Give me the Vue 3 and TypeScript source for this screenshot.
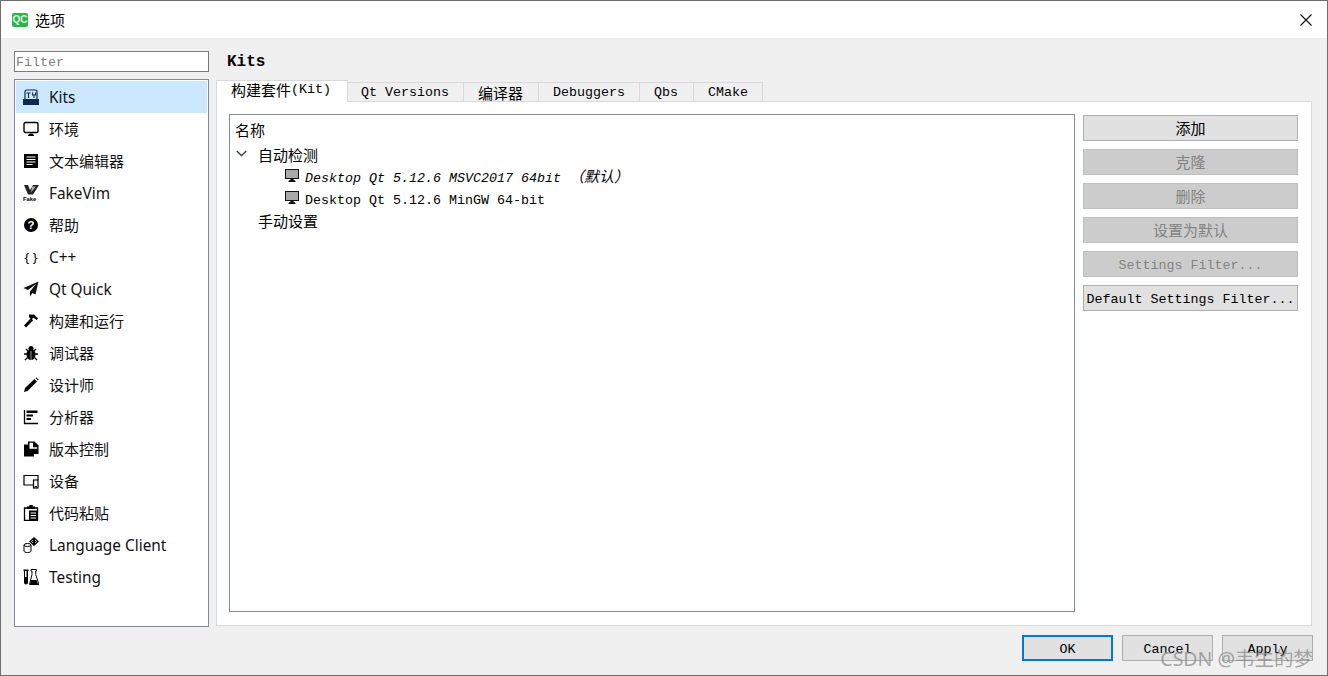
<script setup lang="ts">
const navItems: string[] = ['Kits','环境','文本编辑器','FakeVim','帮助','C++','Qt Quick','构建和运行','调试器','设计师','分析器','版本控制','设备','代码粘贴','Language Client','Testing']
const isLatin = (s: string): boolean => /^[A-Za-z]/.test(s)
const sideButtons = [
  { label: '添加', disabled: false, cjk: true },
  { label: '克隆', disabled: true, cjk: true },
  { label: '删除', disabled: true, cjk: true },
  { label: '设置为默认', disabled: true, cjk: true },
  { label: 'Settings Filter...', disabled: true, cjk: false },
  { label: 'Default Settings Filter...', disabled: false, cjk: false },
]
</script>

<template>
  <div class="window">
    <header class="titlebar">
      <span class="logo">QC</span>
      <span class="title">选项</span>
      <svg class="close" width="14" height="14" viewBox="0 0 14 14"><path d="M1.5 1.5l11 11M12.5 1.5l-11 11" stroke="#111" stroke-width="1.1" fill="none"/></svg>
    </header>
    <div class="body">
      <div class="columns">
        <aside class="sidebar">
          <input class="filter" placeholder="Filter" />
          <ul class="nav">
            <li v-for="(item, i) in navItems" :key="item" class="nav-item" :class="{ active: i === 0, latin: isLatin(item) }">
              <svg class="nav-icon" width="16" height="16" viewBox="0 0 16 16">
                <g v-if="i === 0">
                  <path d="M2 10V2.5A1.5 1.5 0 0 1 3.5 1h9A1.5 1.5 0 0 1 14 2.5V10" fill="none" stroke="#0f2a4a" stroke-width="1.2"/>
                  <path d="M3.5 4h4M5.5 4v5M9.5 3.5v2.5h3v-2.5M11 6v3" fill="none" stroke="#0f2a4a" stroke-width="1.1"/>
                  <rect x="0" y="10" width="16" height="6" fill="#0f2a4a"/>
                </g>
                <g v-else-if="i === 1">
                  <rect x="1" y="1.5" width="14" height="10" rx="1.5" fill="none" stroke="#000" stroke-width="1.4"/>
                  <path d="M5 15v-1l2-1.5h2l2 1.5v1z" fill="#000"/>
                </g>
                <g v-else-if="i === 2">
                  <rect x="1" y="1" width="14" height="14" fill="#000"/>
                  <path d="M3.5 4h9M3.5 6.5h9M3.5 9h9M3.5 11.5h6" stroke="#fff" stroke-width="1.1"/>
                </g>
                <g v-else-if="i === 3">
                  <path d="M1 0h4l2 5 3-5h6l-6 9.500H5z" fill="#222"/>
                  <path d="M9 1.500l4 0-5 6z" fill="#aaa"/>
                  <text x="0" y="15.600" class="fake">Fake</text>
                </g>
                <g v-else-if="i === 4">
                  <circle cx="8" cy="8" r="7" fill="#000"/>
                  <text x="8" y="12" text-anchor="middle" class="help">?</text>
                </g>
                <g v-else-if="i === 5">
                  <text x="8" y="12.500" text-anchor="middle" class="braces">{ }</text>
                </g>
                <g v-else-if="i === 6">
                  <path d="M15.500 .5L0.500 7l4.500 2 8-6-6 7.500v5l2.500-3.500 3 1.500z" fill="#111"/>
                </g>
                <g v-else-if="i === 7">
                  <path d="M6 1.500h5l4 4-1.500 1.500-3-2.500-1.500 1.500 1 1.500L3 14.500 1 12.500 7.500 5.500 6 4z" fill="#000"/>
                </g>
                <g v-else-if="i === 8">
                  <ellipse cx="8" cy="9.500" rx="4.500" ry="5.500" fill="#000"/>
                  <circle cx="8" cy="3.500" r="2.500" fill="#000"/>
                  <path d="M3 4l2 2M13 4l-2 2M1 9h3M15 9h-3M2 15l2.500-2.500M14 15l-2.500-2.500" stroke="#000" stroke-width="1.300"/>
                  <path d="M8 6v9" stroke="#fff" stroke-width=".6"/>
                </g>
                <g v-else-if="i === 9">
                  <path d="M1 15l1-4L11.500 2l2.500 2.500L4.500 14z" fill="#000"/>
                  <path d="M12.500 1l1-.5 2 2-.5 1z" fill="#000"/>
                </g>
                <g v-else-if="i === 10">
                  <path d="M1.500 1v13.500H15" fill="none" stroke="#000" stroke-width="1.300"/>
                  <path d="M3.500 1.500h11v2.500h-11zM3.500 5.500h6.500v2h-6.500zM3.500 9h4.500v2h-4.500z" fill="#000"/>
                </g>
                <g v-else-if="i === 11">
                  <path d="M1 3.500h4v12H1z" fill="#000"/>
                  <path d="M5 .5h6.500L15.500 4.500V13H5z" fill="#000"/>
                  <path d="M6.500 1.800h3.500v4.500h4.200V7.800h-7.700z" fill="#fff"/>
                  <path d="M5 13h6v2.500H5z" fill="#000"/>
                </g>
                <g v-else-if="i === 12">
                  <path d="M10 12H1V2.500h14V7" fill="none" stroke="#000" stroke-width="1.200"/>
                  <rect x="10.500" y="7" width="4.500" height="8" fill="#fff" stroke="#000" stroke-width="1.200"/>
                  <rect x="11.500" y="13" width="2.500" height="1.200" fill="#000"/>
                </g>
                <g v-else-if="i === 13">
                  <path d="M1.500 3h13v12.500h-13z" fill="none" stroke="#000" stroke-width="1.300"/>
                  <path d="M4 1.500h2l.5-1.500h3l.5 1.500h2V4H4z" fill="#000"/>
                  <rect x="6" y="5.500" width="8.500" height="10" fill="#000"/>
                  <path d="M7.500 8h5.500M7.500 10.500h5.500M7.500 13h5.500" stroke="#fff" stroke-width="1"/>
                </g>
                <g v-else-if="i === 14">
                  <path d="M1 8v6c0 1 1.500 1.500 3.500 1.500S8 15 8 14V8" fill="#fff" stroke="#000" stroke-width="1"/>
                  <ellipse cx="4.500" cy="8" rx="3.500" ry="1.500" fill="#fff" stroke="#000" stroke-width="1"/>
                  <path d="M11 0l5 4.500L11 9 6 4.500z" fill="#000"/>
                  <path d="M9.800 3L8.500 4.500l1.300 1.500M12.200 3l1.300 1.500-1.300 1.500" stroke="#fff" stroke-width=".9" fill="none"/>
                </g>
                <g v-else>
                  <path d="M0.500 .5h5v1.500h-.5V13.500a2 2 0 0 1-4 0V2H.5z" fill="#000"/>
                  <path d="M2 2h1.500v6H2z" fill="#fff"/>
                  <path d="M8 .5h5.500V2h-.8v3.500L16 15.500H6.500L9 5.500V2H8z" fill="#fff" stroke="#000" stroke-width="1"/>
                  <path d="M8 11h5.500l1.500 4H7z" fill="#000"/>
                </g>
              </svg>
              <span class="nav-label">{{ item }}</span>
            </li>
          </ul>
        </aside>
        <main class="main">
          <h1 class="heading">Kits</h1>
          <div class="tabs">
            <div class="tab selected"><span class="c">构建套件</span>(Kit)</div>
            <div class="tab versions">Qt Versions</div>
            <div class="tab compilers"><span class="c">编译器</span></div>
            <div class="tab">Debuggers</div>
            <div class="tab qbs">Qbs</div>
            <div class="tab">CMake</div>
          </div>
          <section class="pane">
            <div class="tree">
              <div class="tree-head c">名称</div>
              <div class="row group">
                <svg class="chevron" width="11" height="7" viewBox="0 0 11 7"><path d="M.8 1l4.700 4.700L10.200 1" fill="none" stroke="#444" stroke-width="1.500"/></svg>
                <span class="c">自动检测</span>
              </div>
              <div class="row kit italic">
                <svg class="kit-icon" width="14" height="13" viewBox="0 0 14 13"><rect x=".5" y=".5" width="13" height="9" fill="#a9a9a9" stroke="#111"/><path d="M3.500 13v-1l2.500-2h2l2.500 2v1z" fill="#111"/></svg>
                <span>Desktop Qt 5.12.6 MSVC2017 64bit <span class="c">（默认）</span></span>
              </div>
              <div class="row kit">
                <svg class="kit-icon" width="14" height="13" viewBox="0 0 14 13"><rect x=".5" y=".5" width="13" height="9" fill="#a9a9a9" stroke="#111"/><path d="M3.500 13v-1l2.500-2h2l2.500 2v1z" fill="#111"/></svg>
                <span class="kit-plain">Desktop Qt 5.12.6 MinGW 64-bit</span>
              </div>
              <div class="row group leaf"><span class="c">手动设置</span></div>
            </div>
            <div class="actions">
              <button v-for="b in sideButtons" :key="b.label" class="btn" :class="{ off: b.disabled, c: b.cjk }">{{ b.label }}</button>
            </div>
          </section>
        </main>
      </div>
      <footer class="footer">
        <button class="btn dlg primary">OK</button>
        <button class="btn dlg">Cancel</button>
        <button class="btn dlg">Apply</button>
      </footer>
      <span class="watermark">CSDN @韦生的梦</span>
    </div>
  </div>
</template>

<style scoped>
.window {
  width: 1328px;
  height: 676px;
  box-sizing: border-box;
  border: 1px solid #6f6f6f;
  display: flex;
  flex-direction: column;
  background: #f0f0f0;
  font-family: "Liberation Mono", "Noto Sans CJK SC", monospace;
  font-size: 13.33px;
  color: #000;
  overflow: hidden;
}
.c {
  font-family: "Noto Sans CJK SC", sans-serif;
  font-size: 15px;
}
.titlebar {
  height: 37px;
  flex: none;
  background: #fff;
  display: flex;
  align-items: center;
  padding: 0 14px 0 11px;
}
.logo {
  width: 16px;
  height: 14px;
  border-radius: 2px;
  background: #2cb34a;
  color: #d8f5dc;
  font: bold 10px/14px "Liberation Sans", sans-serif;
  text-align: center;
}
.title {
  margin-left: 7px;
  font: 15px "Noto Sans CJK SC", sans-serif;
}
.close {
  margin-left: auto;
}
.body {
  flex: 1;
  position: relative;
  display: flex;
  flex-direction: column;
  min-height: 0;
}
.columns {
  display: flex;
  padding: 13px 15px 0 13px;
  gap: 7px;
  height: 589px;
  box-sizing: border-box;
  flex: none;
}
.sidebar {
  width: 195px;
  flex: none;
  display: flex;
  flex-direction: column;
  gap: 7px;
}
.filter {
  height: 21px;
  flex: none;
  box-sizing: border-box;
  border: 1px solid #7a7a7a;
  background: #fff;
  padding: 2px 1px 0;
  margin: 0;
  font: 13.33px "Liberation Mono", monospace;
  outline: none;
}
.filter::placeholder {
  color: #808080;
  opacity: 1;
}
.nav {
  list-style: none;
  margin: 0;
  padding: 1px;
  height: 548px;
  flex: none;
  box-sizing: border-box;
  background: #fff;
  border: 1px solid #7f8a94;
}
.nav-item {
  height: 32px;
  display: flex;
  align-items: center;
  padding-left: 7px;
  font: 15px "Noto Sans CJK SC", sans-serif;
  color: #111;
}
.nav-item.latin {
  font: 15.400px "Noto Sans", sans-serif;
}
.nav-item.active {
  background: #cce8ff;
}
.nav-icon {
  flex: none;
}
.nav-label {
  margin-left: 10px;
  padding-bottom: 2px;
}
.nav-item.latin .nav-label {
  padding-bottom: 0;
}
.fake {
  font: bold 5.800px "Liberation Sans", sans-serif;
}
.help {
  font: bold 11.500px "Liberation Sans", sans-serif;
  fill: #fff;
}
.braces {
  font: 13px "Noto Sans", sans-serif;
}
.main {
  flex: 1;
  display: flex;
  flex-direction: column;
  min-width: 0;
}
.heading {
  margin: 0 0 0 11px;
  height: 29px;
  flex: none;
  font: bold 16px/22px "Liberation Mono", monospace;
}
.tabs {
  display: flex;
  align-items: flex-end;
  height: 22px;
  flex: none;
  position: relative;
  z-index: 1;
  margin-bottom: -1px;
}
.tab {
  height: 20px;
  box-sizing: border-box;
  border: 1px solid #d9d9d9;
  border-left: none;
  background: #f0f0f0;
  padding: 0 14px;
  display: flex;
  align-items: center;
  white-space: nowrap;
}
.tab.versions {
  padding: 0 14px 0 13px;
}
.tab.compilers {
  padding: 0 15px 0 14px;
}
.tab.qbs {
  padding: 0 15px 0 14px;
}
.tab.selected {
  height: 22px;
  background: #fff;
  border-left: 1px solid #d9d9d9;
  border-bottom: none;
  padding: 0 16px 4px 14px;
}
.pane {
  height: 525px;
  flex: none;
  box-sizing: border-box;
  background: #fff;
  border: 1px solid #d9d9d9;
  display: flex;
  padding: 12px 13px 13px 12px;
  gap: 8px;
}
.tree {
  flex: 1;
  border: 1px solid #7f8a94;
  padding: 4px 0 0 5px;
  min-width: 0;
}
.tree-head {
  height: 23px;
  line-height: 21px;
}
.row {
  height: 22px;
  display: flex;
  align-items: center;
}
.chevron {
  margin-left: 1px;
}
.group > .c {
  margin-left: 11px;
  padding-top: 2px;
}
.leaf > .c {
  margin-left: 23px;
}
.kit {
  padding-left: 50px;
}
.kit-icon {
  margin-right: 6px;
  flex: none;
}
.kit-plain {
  padding-top: 6px;
}
.italic {
  font-style: italic;
}
.actions {
  width: 215px;
  flex: none;
  display: flex;
  flex-direction: column;
  gap: 8px;
  padding-top: 1px;
}
.btn {
  height: 26px;
  flex: none;
  box-sizing: border-box;
  background: #e1e1e1;
  border: 1px solid #adadad;
  color: #000;
  padding: 3px 0 0;
  font-family: "Liberation Mono", monospace;
  font-size: 13.33px;
  line-height: 20px;
  white-space: nowrap;
}
.btn.c {
  font-family: "Noto Sans CJK SC", sans-serif;
  font-size: 15px;
  padding: 0;
}
.btn.off {
  background: #cccccc;
  border-color: #bfbfbf;
  color: #838383;
}
.footer {
  display: flex;
  justify-content: flex-end;
  gap: 9px;
  padding: 8px 14px 0 0;
}
.dlg {
  width: 91px;
}
.primary {
  border: 2px solid #0078d7;
}
.watermark {
  position: absolute;
  right: 14px;
  bottom: 3px;
  font: 19.500px "Noto Sans", "Noto Sans CJK SC", sans-serif;
  color: rgba(135, 135, 135, 0.72);
  white-space: nowrap;
}
</style>
